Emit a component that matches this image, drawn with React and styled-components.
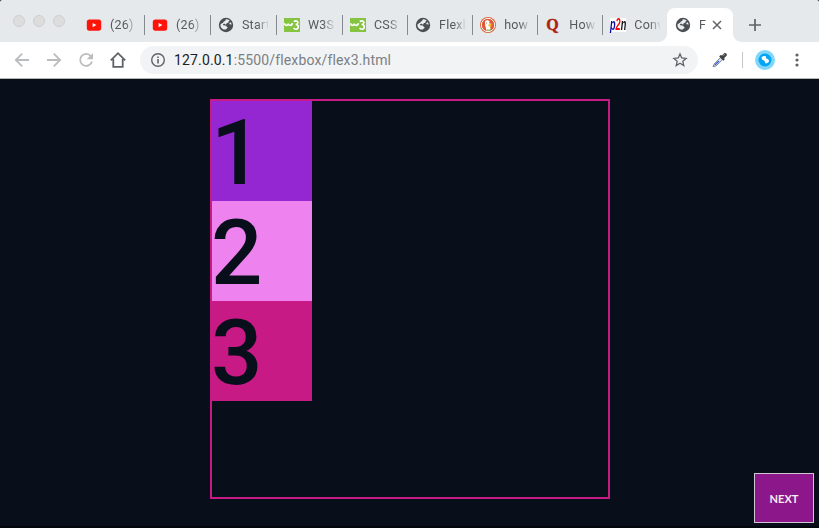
import React from "react";
import styled, { createGlobalStyle } from "styled-components";

const GlobalStyle = createGlobalStyle`
  * { box-sizing: border-box; }
  body { margin: 0; background: #080f1b; overflow: hidden; }
`;

const Window = styled.div`
  width: 819px;
  height: 528px;
  display: flex;
  flex-direction: column;
  background: #080f1b;
  font-family: Roboto, sans-serif;
  overflow: hidden;
`;

const TabStrip = styled.div`
  height: 42px;
  flex: none;
  display: flex;
  align-items: flex-end;
  background: #e5e9ec;
  border-radius: 2px 2px 0 0;
`;

const WindowButtons = styled.div`
  width: 78.9px;
  height: 42px;
  padding: 15px 0 0 13px;
  display: flex;
  gap: 8px;
`;

const WindowButton = styled.span`
  width: 12px;
  height: 12px;
  border-radius: 50%;
  background: #dddddd;
  border: 1px solid #cdcfd0;
`;

const Tab = styled.div`
  width: ${(p) => (p.$wide ? 66 : 65.1)}px;
  height: 34px;
  flex: none;
  position: relative;
  display: flex;
  align-items: center;
  padding-left: 7.1px;
  border-radius: 8px 8px 0 0;
  background: ${(p) => (p.$active ? "#fff" : "transparent")};

  &::after {
    content: "";
    position: absolute;
    right: 0;
    top: 7px;
    width: 1px;
    height: 20px;
    background: ${(p) => (p.$divider ? "#858a8e" : "transparent")};
  }
`;

const ActiveTab = styled(Tab)`
  width: 66px;
  padding-left: 8px;
  margin-left: -1.4px;

  &::before, &::after {
    content: "";
    position: absolute;
    top: auto;
    bottom: 0;
    width: 8px;
    height: 8px;
  }
  &::before {
    left: -8px;
    background: radial-gradient(circle at 0 0, transparent 7.5px, #fff 8px);
  }
  &::after {
    right: -8px;
    background: radial-gradient(circle at 100% 0, transparent 7.5px, #fff 8px);
  }
`;

const IconSlot = styled.span`
  width: 16px;
  height: 16px;
  flex: none;
  display: flex;
  svg { display: block; }
`;

const TabTitle = styled.span`
  width: ${(p) => p.$width || 26}px;
  margin-left: 8px;
  overflow: hidden;
  white-space: nowrap;
  font-size: 12.5px;
  line-height: 18px;
  letter-spacing: 0.2px;
  color: #55595d;
  mask-image: linear-gradient(to right, #000 ${(p) => (p.$width ? 90 : 58)}%, transparent 106%);
`;

const CloseSlot = styled.span`
  display: flex;
  margin-left: 4px;
`;

const NewTab = styled.div`
  width: 28px;
  height: 34px;
  margin-left: 8px;
  display: flex;
  align-items: center;
  justify-content: center;
`;

const Toolbar = styled.div`
  height: 37px;
  flex: none;
  display: flex;
  align-items: center;
  padding: 0 0 1px 12px;
  background: #fff;
  border-bottom: 1px solid #b5b5b5;
`;

const NavButtons = styled.div`
  display: flex;
  gap: 12px;
  width: 128px;
  svg { display: block; }
`;

const AddressBar = styled.div`
  width: 558px;
  height: 28px;
  display: flex;
  align-items: center;
  padding: 0 8px 0 8px;
  border-radius: 14px;
  background: #f1f3f4;
`;

const Url = styled.span`
  flex: 1;
  margin-left: 6px;
  font-size: 14px;
  line-height: 20px;
  letter-spacing: 0.15px;
  color: #7b8085;
`;

const Host = styled.span`
  color: #202124;
`;

const Extensions = styled.div`
  flex: 1;
  display: flex;
  align-items: center;
  padding-left: 13px;
`;

const Divider = styled.span`
  width: 1px;
  height: 16px;
  margin: 0 12px 0 13px;
  background: #c4c7ca;
`;

const MenuSlot = styled.span`
  display: flex;
  margin-left: 14px;
`;

const Page = styled.main`
  flex: 1;
  display: flex;
  align-items: flex-start;
  padding: 20px 5px 3px 210px;
  border-bottom: 2px solid #03060c;
`;

const FlexBox = styled.div`
  width: 400px;
  height: 400px;
  flex: none;
  display: flex;
  flex-direction: column;
  border: 2px solid #c71a84;
`;

const Item = styled.div`
  width: 100px;
  height: 100px;
  color: #080f1b;
  background: ${(p) => p.$color};
  font-size: 90.5px;
  font-weight: 500;
  line-height: 104px;
  text-indent: -1px;
`;

const NextButton = styled.button`
  width: 60px;
  height: 50px;
  margin-left: auto;
  align-self: flex-end;
  padding: 0;
  border: 1px solid #d3c5d5;
  background: #8b178b;
  color: #f7ecf0;
  font: 700 11px Lato, sans-serif;
`;

const YouTube = () => (
  <svg width="16" height="16" viewBox="0 0 16 16">
    <rect x="0.8" y="2.5" width="14.4" height="11.2" rx="2.6" fill="#ff1409" />
    <path d="M6.6 5.9v4.4l3.8-2.2z" fill="#fff" />
  </svg>
);

const Globe = () => (
  <svg width="16" height="16" viewBox="0 0 16 16">
    <circle cx="8" cy="8" r="7.2" fill="#4b4f53" />
    <path d="M8.8 2.2c-2.2.2-.5 1.5-2.4 2.1-1.4.4-.6 1.6-2 1.8-.9.1-.6 1-1.8 1.1-.5 1.4.2 3.3 1.4 4.2 1.2 1 2.6 1.3 3.9 1.2.2-1.1 1.5-1 1.6-2.1.1-1-1-.8-1.4-1.5-.5-.8-1.9-.7-3.2-.8.2-1.2.7-1.6 1.8-1.5.9 0 .6 1.1 1.3 1 .6-.2.2-1.2 1-1.6.7-.4 1.6-.4 1.6-1.2 0-.7.7-.8 1.2-1.3-.8-.8-1.8-1.3-3-1.4z" fill="#e9edef" />
    <path d="M12.6 5.2c-.8.5-1.4.7-1.3 1.6.1.8 1.4.8 2.3.9 0-1-.3-1.8-1-2.5z" fill="#e9edef" />
  </svg>
);

const W3 = () => (
  <svg width="16" height="16" viewBox="0 0 16 16">
    <path d="M0 1h16v14H0z" fill="#85c441" />
    <path d="M.7 6.2c0 2.9 3.2 2.9 3.5.3.3 2.6 3.8 2.6 4.2-.3M9.9 4.8c1.3-1.6 4.3-.9 3.9 1-.2 1.4-1.4 1.7-2.2 1.7 1.4 0 2.7.5 2.7 2.3 0 2.9-3.6 3.1-4.7 1.1" fill="none" stroke="#fff" strokeWidth="1.6" />
  </svg>
);

const Duck = () => (
  <svg width="16" height="16" viewBox="0 0 16 16">
    <circle cx="8" cy="8" r="8" fill="#dc5a35" />
    <circle cx="8" cy="8" r="6.7" fill="none" stroke="#fff" />
    <path d="M5.1 4.2c1-1.3 3.5-1 4.5.3.8 1.1.8 2.4.4 3.8l.7 5.2c-1.5.6-2.9.5-4.3 0C5.9 10.5 4.5 6.8 5.1 4.2z" fill="#fff" />
    <path d="M8.5 7.3c1.5-.8 2.8-.8 4-.3-.6.9-2 .9-2.5 1.5.5.6 1.6.3 2.3.3-.8 1.1-3.2 1.2-3.9.1z" fill="#fdc51b" />
    <path d="M6.8 12.3l2 .4 2-.8v1.4c-1.4.8-3 .6-4 0z" fill="#65bc46" />
    <circle cx="6.7" cy="6.1" r=".5" fill="#38526b" /><circle cx="9.5" cy="5.7" r=".5" fill="#38526b" />
  </svg>
);

const QuoraMark = styled.span`
  width: 16px;
  font: 700 16px/15px "Liberation Serif", serif;
  text-indent: 1px;
  color: #ad210f;
  -webkit-text-stroke: 0.4px #ad210f;
`;

const P2nMark = styled.span`
  width: 16px;
  height: 14px;
  margin-top: 1px;
  background: #fff;
  font: italic 700 16px/13px "Liberation Sans", sans-serif;
  white-space: nowrap;
  span {
    display: block;
    width: 28px;
    transform: scaleX(0.57);
    transform-origin: 0 50%;
  }
  b { color: #08089c; }
  i { color: #f40b0b; }
  em { color: #090909; }
`;

const P2n = () => (
  <P2nMark><span><b>p</b><i>2</i><em>n</em></span></P2nMark>
);

const Quora = () => <QuoraMark>Q</QuoraMark>;

const tabs = [
  [YouTube, "(26)"],
  [YouTube, "(26)"],
  [Globe, "Start"],
  [W3, "W3S"],
  [W3, "CSS"],
  [Globe, "Flexb"],
  [Duck, "how"],
  [Quora, "How"],
  [P2n, "Conv"],
];

const NavIcon = ({ d, color }) => (
  <svg width="20" height="20" viewBox="0 0 20 20" fill="none" stroke={color} strokeWidth="1.8">
    <path d={d} />
  </svg>
);

const Reload = () => (
  <svg width="20" height="20" viewBox="0 0 20 20">
    <path d="M14.9 6.2a6 6 0 1 0 1.1 5.3" fill="none" stroke="#babcbe" strokeWidth="1.8" />
    <path d="M17 3v6.3h-6.3z" fill="#babcbe" />
  </svg>
);

const Info = () => (
  <svg width="20" height="20" viewBox="0 0 20 20">
    <circle cx="10" cy="10" r="6.3" fill="none" stroke="#5f6368" strokeWidth="1.4" />
    <path d="M9.2 9h1.6v4.5H9.2zM9.2 6.4h1.6V8H9.2z" fill="#5f6368" />
  </svg>
);

const Star = () => (
  <svg width="20" height="20" viewBox="0 0 20 20">
    <path d="M10 3.9l1.7 4.1 4.4.4-3.3 2.9 1 4.3-3.8-2.3-3.8 2.3 1-4.3-3.3-2.9 4.4-.4z" fill="none" stroke="#5f6368" strokeWidth="1.3" />
  </svg>
);

const Dropper = () => (
  <svg width="18" height="18" viewBox="0 0 18 18">
    <path d="M2 15.8l1.2-2.8 6.2-6.5 2.2 2.2-6.6 6.2z" fill="#d3dcec" stroke="#6c7078" strokeWidth=".8" />
    <path d="M3.3 14.5l1-1.7 3-3.1 1.1.9-3.7 3.4z" fill="#315ee0" />
    <path d="M8.2 5.4l1.3-1.3 1.4.4 2.2-2.3c1.3-1 3.7.7 2.5 2.5l-2.4 2.4.5 1.4-1.3 1.3z" fill="#3f4145" />
    <path d="M11.7 4.2l1.9-1.6 1 .5-2 2z" fill="#868889" />
  </svg>
);

const Extension = () => (
  <svg width="20" height="20" viewBox="0 0 20 20">
    <circle cx="10" cy="10" r="10" fill="#81d6fc" />
    <circle cx="10" cy="10" r="6.5" fill="#03a5f5" />
    <path d="M6.4 7.2l2-1.3h2.2l.6 2.4 2.3 1.1.6 2-1.9 1.9h-1.9l-.8-2.5-2.3-1z" fill="#fff" />
  </svg>
);

const Menu = () => (
  <svg width="16" height="16" viewBox="0 0 16 16" fill="#5f6368">
    <circle cx="8" cy="3" r="1.6" /><circle cx="8" cy="8" r="1.6" /><circle cx="8" cy="13" r="1.6" />
  </svg>
);

export default function App() {
  return (
    <>
      <GlobalStyle />
      <Window>
        <TabStrip>
          <WindowButtons>
            <WindowButton /><WindowButton /><WindowButton />
          </WindowButtons>
          {tabs.map(([Icon, title], i) => (
            <Tab key={i} $wide={i < 4} $divider={i < tabs.length - 1}>
              <IconSlot><Icon /></IconSlot>
              <TabTitle>{title}</TabTitle>
            </Tab>
          ))}
          <ActiveTab $active>
            <IconSlot><Globe /></IconSlot>
            <TabTitle $width={8}>F</TabTitle>
            <CloseSlot>
              <svg width="12" height="12" viewBox="0 0 12 12" stroke="#5f6368" strokeWidth="1.5">
                <path d="M2 2l8 8M10 2l-8 8" />
              </svg>
            </CloseSlot>
          </ActiveTab>
          <NewTab>
            <svg width="14" height="14" viewBox="0 0 14 14" stroke="#5f6368" strokeWidth="1.7">
              <path d="M7 1v12M1 7h12" />
            </svg>
          </NewTab>
        </TabStrip>
        <Toolbar>
          <NavButtons>
            <NavIcon color="#babcbe" d="M17 10H4M10.2 3.6L3.8 10l6.4 6.4" />
            <NavIcon color="#babcbe" d="M3 10h13M9.8 3.6l6.4 6.4-6.4 6.4" />
            <Reload />
            <NavIcon color="#5f6368" d="M2.8 10.4L10 3.2l7.2 7.2M5.3 9v7.8h9.4V9" />
          </NavButtons>
          <AddressBar>
            <Info />
            <Url><Host>127.0.0.1</Host>:5500/flexbox/flex3.html</Url>
            <Star />
          </AddressBar>
          <Extensions>
            <Dropper />
            <Divider />
            <Extension />
            <MenuSlot><Menu /></MenuSlot>
          </Extensions>
        </Toolbar>
        <Page>
          <FlexBox>
            <Item $color="#9527d2">1</Item>
            <Item $color="#ee82ee">2</Item>
            <Item $color="#c71a84">3</Item>
          </FlexBox>
          <NextButton>NEXT</NextButton>
        </Page>
      </Window>
    </>
  );
}
